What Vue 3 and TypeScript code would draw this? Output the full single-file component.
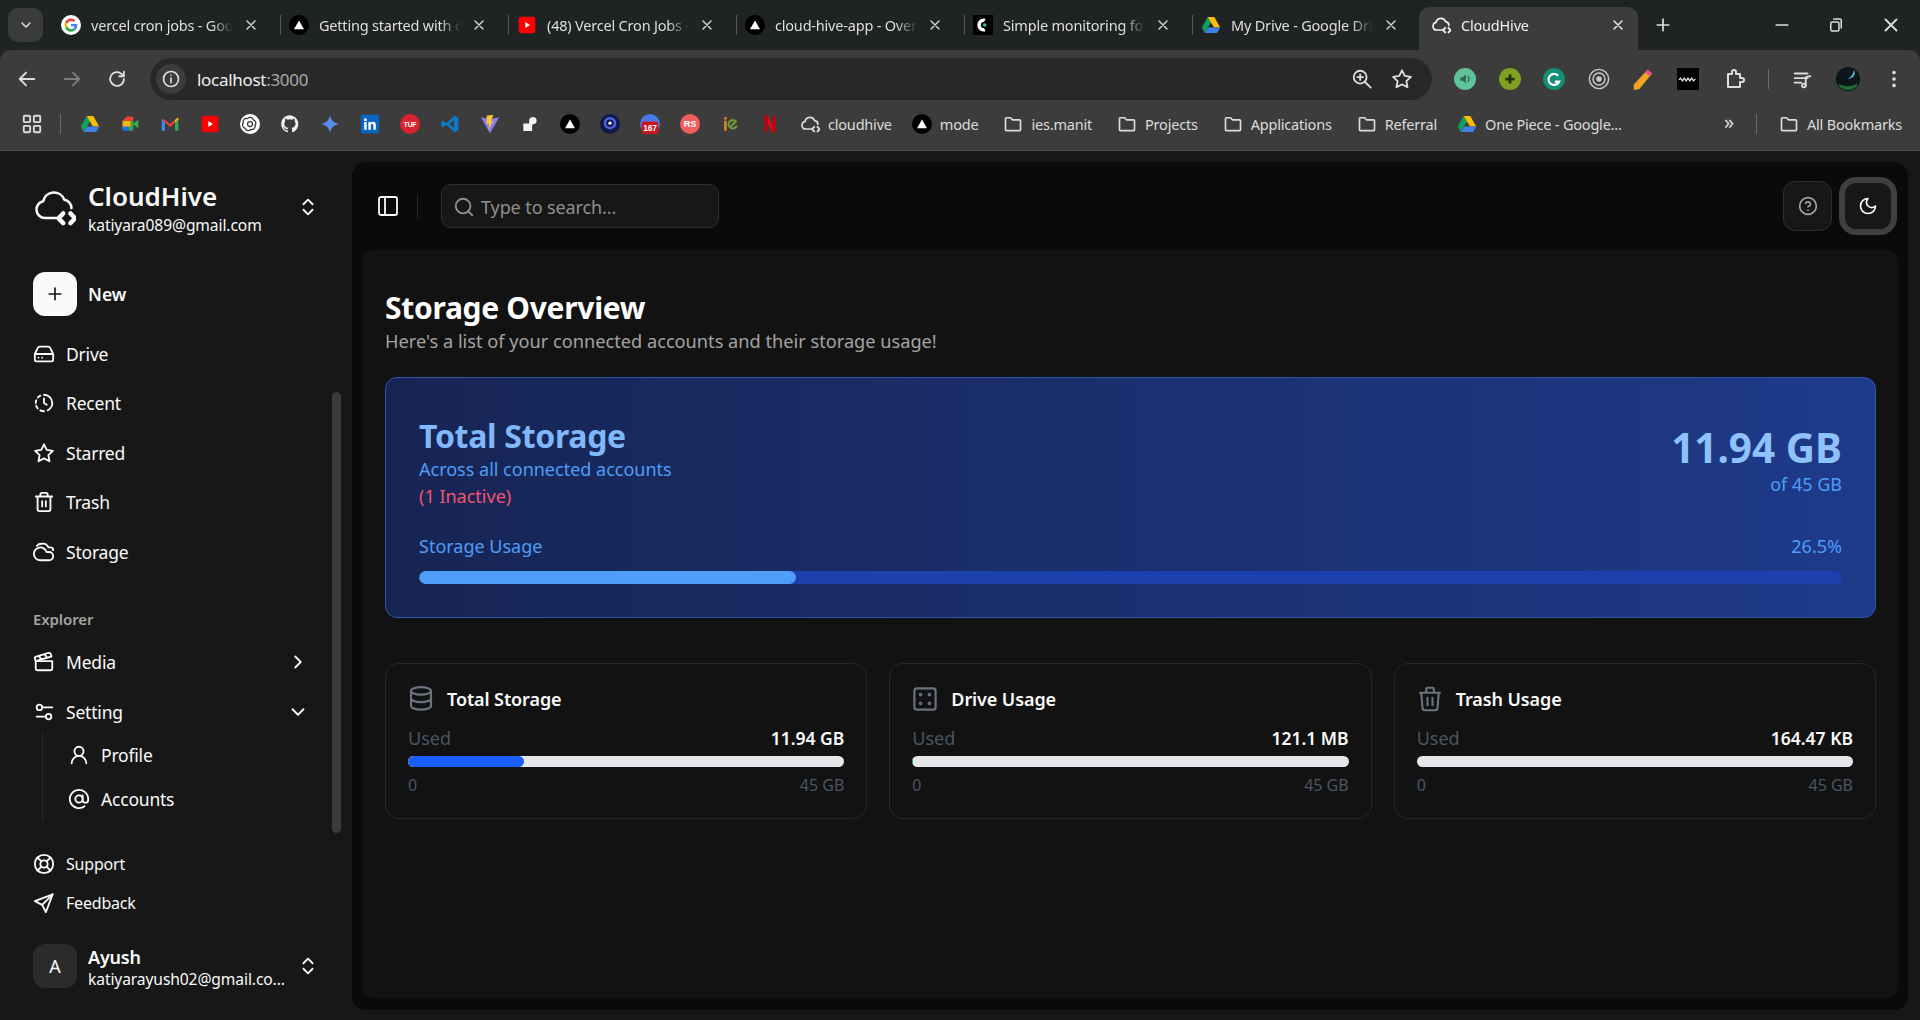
<script setup lang="ts">
interface Tab {
  title: string
  icon: string
  active?: boolean
}

interface StatCard {
  title: string
  icon: string
  used: string
  fill: number
  color: string
}

const ic: Record<string, string> = {
  hive: '<path d="M13.5 18H7a4.6 4.6 0 0 1-.9-9.1A6 6 0 0 1 17.6 8a4.6 4.6 0 0 1 3.9 4.6"/><path d="m17 15.5-2.5 2.7 2.5 2.6M21 15.5l2.5 2.7-2.5 2.6" stroke-width="2.4"/>',
  updown: '<path d="m7 9 5-5 5 5M7 15l5 5 5-5"/>',
  plus: '<path d="M5 12h14M12 5v14"/>',
  drive: '<path d="M22 12H2M5.45 5.11 2 12v6a2 2 0 0 0 2 2h16a2 2 0 0 0 2-2v-6l-3.45-6.89A2 2 0 0 0 16.76 4H7.24a2 2 0 0 0-1.79 1.11ZM6 16h.01M10 16h.01"/>',
  recent: '<path d="M12 7v5l3 2M21 12a9 9 0 0 0-9-9" /><path d="M8 4c-1 .5-2 1.200-2.700 2M3.500 9a9 9 0 0 0-.5 3M3.500 15c.3 1 .9 2 1.600 2.800M8 20c1.200.7 2.600 1 4 1M16 20c1.500-.8 2.800-2 3.700-3.500M20.700 15c.2-.9.300-2 .3-3"/>',
  star: '<path d="M12 2.500l3 6.100 6.700 1-4.900 4.700 1.200 6.700-6-3.200L6 21l1.200-6.700-4.900-4.700 6.700-1Z"/>',
  trash: '<path d="M3 6h18M19 6v14a2 2 0 0 1-2 2H7a2 2 0 0 1-2-2V6M8 6V4a2 2 0 0 1 2-2h4a2 2 0 0 1 2 2v2M10 11v6M14 11v6"/>',
  cloudy: '<path d="M17.500 21H8a7 7 0 1 1 6.700-9h2.800a4.500 4.500 0 1 1 0 9Z"/><path d="M22 10a3 3 0 0 0-3-3h-2.200A7 7 0 0 0 9 3c-2 0-3.600.9-4.800 2.300"/>',
  media: '<path d="M20.200 6 3 11l-.9-2.400c-.3-1.100.3-2.200 1.300-2.500l13.500-4c1.100-.3 2.200.3 2.500 1.300ZM6.200 5.300l3.100 3.900M12.400 3.400l3.100 4"/><path d="M3 11h18v8a2 2 0 0 1-2 2H5a2 2 0 0 1-2-2Z"/>',
  setting: '<circle cx="7" cy="7" r="3"/><path d="M10 7h11"/><circle cx="17" cy="17" r="3"/><path d="M4 17h10"/>',
  right: '<path d="m9 18 6-6-6-6"/>',
  down: '<path d="m6 9 6 6 6-6"/>',
  user: '<circle cx="12" cy="8" r="5"/><path d="M20 21a8 8 0 0 0-16 0"/>',
  at: '<circle cx="12" cy="12" r="4"/><path d="M16 8v5a3 3 0 0 0 6 0v-1a10 10 0 1 0-4 8"/>',
  support: '<circle cx="12" cy="12" r="10"/><circle cx="12" cy="12" r="4"/><path d="m4.930 4.930 4.240 4.240M14.830 14.830l4.240 4.240M14.830 9.170l4.240-4.240M4.930 19.070l4.240-4.240"/>',
  send: '<path d="M21.500 2.500 2 10l8 4 4 8Z"/><path d="M21.500 2.500 10 14"/>',
  panel: '<rect x="3" y="3" width="18" height="18" rx="2"/><path d="M9 3v18"/>',
  search: '<circle cx="11" cy="11" r="8"/><path d="m21 21-4.300-4.300"/>',
  help: '<circle cx="12" cy="12" r="10"/><path d="M9.090 9a3 3 0 0 1 5.830 1c0 2-3 3-3 3M12 17h.01"/>',
  moon: '<path d="M12 3a6 6 0 0 0 9 9 9 9 0 1 1-9-9Z"/>',
  database: '<ellipse cx="12" cy="5.500" rx="8" ry="3"/><path d="M4 5.500v6a8 3 0 0 0 16 0v-6M4 11.500v6a8 3 0 0 0 16 0v-6"/>',
  dice: '<rect x="3.500" y="3.500" width="17" height="17" rx="2"/><circle cx="8.500" cy="8.500" r=".6"/><circle cx="15.500" cy="8.500" r=".6"/><circle cx="8.500" cy="15.500" r=".6"/><circle cx="15.500" cy="15.500" r=".6"/>',
  bin: '<path d="M4 7h16M10 11v6M14 11v6M5 7l1 12a2 2 0 0 0 2 2h8a2 2 0 0 0 2-2l1-12M9 7V4a1 1 0 0 1 1-1h4a1 1 0 0 1 1 1v3"/>',
  back: '<path d="M20 12H5M11 5l-7 7 7 7"/>',
  forward: '<path d="M4 12h15M13 5l7 7-7 7"/>',
  reload: '<path d="M19.500 12a7.500 7.500 0 1 1-2.300-5.400L19.500 9M19.500 4v5h-5"/>',
  info: '<circle cx="12" cy="12" r="9"/><path d="M12 11v5.500M12 7.500h.01"/>',
  zoom: '<circle cx="10" cy="10" r="7"/><path d="m15 15 6.500 6.500M10 7v6M7 10h6"/>',
  close: '<path d="m6 6 12 12M18 6 6 18"/>',
  min: '<path d="M5 12h14"/>',
  restore: '<rect x="5" y="8" width="11" height="12" rx="2"/><path d="M9 4h8a2 2 0 0 1 2 2v10"/>',
  grid: '<rect x="3" y="3" width="7" height="7" rx="1"/><rect x="14" y="3" width="7" height="7" rx="1"/><rect x="3" y="14" width="7" height="7" rx="1"/><rect x="14" y="14" width="7" height="7" rx="1"/>',
  folder: '<path d="M3 5.500a1 1 0 0 1 1-1h5l2.500 2.500H20a1 1 0 0 1 1 1v11a1 1 0 0 1-1 1H4a1 1 0 0 1-1-1Z"/>',
  ext: '<path d="M6 7h4V5a2 2 0 0 1 4 0v2h4v4h2a2 2 0 0 1 0 4h-2v5H6Z"/>',
  queue: '<path d="M3 6h14M3 11h14M3 16h7M15 19V10l5-1"/><circle cx="13" cy="19" r="2"/>',
  dots: '<circle cx="12" cy="5" r="1"/><circle cx="12" cy="12" r="1"/><circle cx="12" cy="19" r="1"/>'
}

const badgeText = 'font-family="Liberation Sans, sans-serif" font-weight="700" text-anchor="middle" fill="#fff"'

const fav: Record<string, string> = {
  google: '<circle cx="12" cy="12" r="12" fill="#fff"/><path d="M19.500 12.200c0-.6 0-1-.1-1.500H12v2.900h4.300c-.2 1-.8 1.800-1.600 2.400l2.500 1.900c1.500-1.300 2.300-3.300 2.300-5.700Z" fill="#4285f4"/><path d="M12 20c2.100 0 3.900-.7 5.200-1.900l-2.500-2c-.7.500-1.600.8-2.700.8-2.100 0-3.800-1.400-4.500-3.300L4.900 15.600A8 8 0 0 0 12 20Z" fill="#34a853"/><path d="M7.500 13.600a4.800 4.800 0 0 1 0-3.100L4.900 8.400a8 8 0 0 0 0 7.200Z" fill="#fbbc05"/><path d="M12 7.100c1.200 0 2.200.4 3 1.200l2.200-2.200A8 8 0 0 0 4.900 8.400l2.600 2.100C8.200 8.500 9.900 7.100 12 7.100Z" fill="#ea4335"/>',
  vercel: '<circle cx="12" cy="12" r="12" fill="#000"/><path d="M12 6.500 18 17H6Z" fill="#fff"/>',
  ytsmall: '<rect x="2" y="2" width="20" height="20" rx="3" fill="#f00"/><path d="m10 8.500 5.500 3.500-5.500 3.500Z" fill="#fff"/>',
  cronitor: '<rect width="24" height="24" fill="#000"/><path d="M15 4.500a7.800 7.800 0 1 0 0 15l-1.500-3.500a3.800 3.800 0 1 1 0-8Z" fill="#fff"/><circle cx="14" cy="12" r="2.200" fill="#22d58b"/>',
  gdrive: '<path d="M8 2.500 1 15l3.500 6.500L12 9Z" fill="#0fa15b"/><path d="M8 2.500h8L23 15h-7.500Z" fill="#fbbc04"/><path d="M8.500 15H23l-3.500 6.500h-15Z" fill="#3f7fe6"/>',
  meet: '<path d="M3 8h10v9H3Z" fill="#f2b705"/><path d="M3 15h8v5H5a2 2 0 0 1-2-2Z" fill="#1a73e8"/><path d="M8 3h6a2 2 0 0 1 2 2v3H3Z" fill="#ea4335"/><path d="M13 8h3v10a2 2 0 0 1-2 2h-3v-5h2Z" fill="#34a853"/><path d="m16 11 6-4v10l-6-4Z" fill="#34a853"/>',
  gmail: '<path d="M2 6v14h4V10Z" fill="#4285f4"/><path d="M22 6v14h-4V10Z" fill="#34a853"/><path d="m2 6 4 1 6 5 6-5 4-1-10 10Z" fill="#ea4335"/><path d="M18 7 22 4v3l-4 3Z" fill="#fbbc04"/>',
  openai: '<circle cx="12" cy="12" r="12" fill="#fff"/><g fill="none" stroke="#333" stroke-width="1.500"><circle cx="12" cy="12" r="3"/><path d="M9 5.500a4 4 0 0 1 7 1.500 4 4 0 0 1 2 6.500 4 4 0 0 1-5 5 4 4 0 0 1-7-1.500 4 4 0 0 1-2-6.500 4 4 0 0 1 5-5Z"/></g>',
  github: '<path d="M12 1.500a10.500 10.500 0 0 0-3.300 20.500c.5.100.7-.2.700-.5v-2c-3 .6-3.600-1.300-3.600-1.300-.5-1.200-1.200-1.500-1.200-1.500-1-.7 0-.7 0-.7 1 .1 1.600 1.100 1.600 1.100 1 1.600 2.500 1.200 3.100.9.100-.7.400-1.200.7-1.400-2.300-.3-4.800-1.200-4.800-5.200 0-1.100.4-2.100 1.100-2.800-.1-.3-.5-1.300.1-2.800 0 0 .9-.3 2.900 1a10 10 0 0 1 5.200 0c2-1.300 2.900-1 2.900-1 .6 1.500.2 2.500.1 2.800.7.700 1.100 1.700 1.100 2.800 0 4-2.400 4.900-4.800 5.200.4.300.7 1 .7 1.900v2.800c0 .3.200.6.700.5A10.500 10.500 0 0 0 12 1.500Z" fill="#f1f1f1"/>',
  gemini: '<path d="M12 1c.6 6 4.500 10 11 11-6.500 1-10.400 5-11 11-.6-6-4.500-10-11-11 6.500-1 10.400-5 11-11Z" fill="#5b8def"/>',
  linkedin: '<rect x="1" y="1" width="22" height="22" rx="2" fill="#0a66c2"/><path d="M5 9.500h3V19H5ZM5 5.500h3v2.800H5ZM10 9.500h3v1.300c.6-1 1.600-1.500 2.800-1.500 2.400 0 3.200 1.500 3.200 4V19h-3v-5c0-1.300-.4-2-1.500-2s-1.500.8-1.500 2v5h-3Z" fill="#fff"/>',
  tuf: `<circle cx="12" cy="12" r="12" fill="#d9232f"/><text x="12" y="15" font-size="8" ${badgeText}>TUF</text>`,
  vscode: '<path d="M17 2 22 4.500v15L17 22 7.500 13l-4 3L1.500 15v-6l2-1 4 3Z" fill="#0a7acb"/><path d="m17 7.500-6 4.500 6 4.500Z" fill="#3c3c3c"/>',
  vite: '<path d="M1 4 12 23 23 4l-11 2Z" fill="#8f7bf5"/><path d="M8 2 16 1l-3 8 3-1-6 11 1-8-3 1Z" fill="#ffca28"/>',
  render: '<path d="M15 3.500a4.500 4.500 0 0 1 5 4.500c0 3-2.500 4.500-5.500 4.500v8H4v-9h7V8a4.500 4.500 0 0 1 4-4.500Z" fill="#f5f5f5"/>',
  circle: '<circle cx="12" cy="12" r="12" fill="#111a46"/><circle cx="12" cy="11" r="6" fill="none" stroke="#4c65e8" stroke-width="3"/><circle cx="12" cy="11" r="2" fill="#fff"/>',
  num167: `<circle cx="12" cy="12" r="12" fill="#4a78e8"/><rect x="2" y="9" width="20" height="15" rx="3" fill="#c9161d"/><text x="12" y="20" font-size="10" ${badgeText}>167</text>`,
  rs: `<circle cx="12" cy="12" r="12" fill="#f25c5c"/><text x="12" y="16" font-size="11" ${badgeText}>RS</text>`,
  ie: '<path d="M5 8h3v12H5ZM5 4h3v2.500H5Z" fill="#e08a1f"/><path d="M20 14a5 5 0 1 1-1-5l-6 6" fill="none" stroke="#6f9a35" stroke-width="2.500"/>',
  netflix: '<path d="M5 2h4.500L19 22h-4.500Z" fill="#e50914"/><path d="M5 2h4v18l-4 2ZM15 2h4v20l-4-2Z" fill="#b20710"/>',
  sound: '<circle cx="12" cy="12" r="12" fill="#5fc39a"/><path d="M7 10v4h2.500l3.500 3V7L9.500 10Z" fill="#2f6b52"/><path d="M15 9a4 4 0 0 1 0 6" fill="none" stroke="#2f6b52" stroke-width="1.500"/>',
  plusgreen: '<circle cx="12" cy="12" r="12" fill="#7ea121"/><path d="M12 7v10M7 12h10" stroke="#22320a" stroke-width="3"/>',
  grammarly: '<circle cx="12" cy="12" r="12" fill="#0f8f76"/><path d="M16.500 8.500a6 6 0 1 0 1 6.500H13" fill="none" stroke="#fff" stroke-width="2.500"/>',
  target: '<g fill="none" stroke="#c8c8c8" stroke-width="1.600"><circle cx="12" cy="12" r="10.500"/><circle cx="12" cy="12" r="6.500"/></g><circle cx="12" cy="12" r="3" fill="#c8c8c8"/>',
  pencil: '<path d="m17 2 5 4L8 23l-6 1 0-6Z" fill="#f6a323"/><path d="m17 2 5 4-2.500 3-5-4Z" fill="#ee4d8b"/>',
  wave: '<rect width="24" height="24" fill="#000"/><path d="M2 13l2-2 2 3 2-3 2 3 2-3 2 3 2-3 2 3 2-2" fill="none" stroke="#eee" stroke-width="1.300"/>',
  avatar: '<circle cx="12" cy="12" r="12" fill="#0c1618"/><path d="M3 17c6 3 14 3 18-1v3a12 12 0 0 1-18 0Z" fill="#1f6b35"/><path d="M18 3c2 4 0 8-6 9 4-3 5-5 6-9Z" fill="#45c3e8"/>'
}

const tabs: Tab[] = [
  { title: 'vercel cron jobs - Google Search', icon: 'google' },
  { title: 'Getting started with cron jobs', icon: 'vercel' },
  { title: '(48) Vercel Cron Jobs - YouTube', icon: 'ytsmall' },
  { title: 'cloud-hive-app - Overview', icon: 'vercel' },
  { title: 'Simple monitoring for cron', icon: 'cronitor' },
  { title: 'My Drive - Google Drive', icon: 'gdrive' }
]

const appIcons = ['gdrive', 'meet', 'gmail', 'ytsmall', 'openai', 'github', 'gemini', 'linkedin', 'tuf', 'vscode', 'vite', 'render', 'vercel', 'circle', 'num167', 'rs', 'ie', 'netflix']
const folders = ['ies.manit', 'Projects', 'Applications', 'Referral']
const extensions = ['sound', 'plusgreen', 'grammarly', 'target', 'pencil', 'wave']

const mainNav = [
  { label: 'Drive', icon: 'drive' },
  { label: 'Recent', icon: 'recent' },
  { label: 'Starred', icon: 'star' },
  { label: 'Trash', icon: 'trash' },
  { label: 'Storage', icon: 'cloudy' }
]

const stats: StatCard[] = [
  { title: 'Total Storage', icon: 'database', used: '11.94 GB', fill: 26.5, color: '#1a5fff' },
  { title: 'Drive Usage', icon: 'dice', used: '121.1 MB', fill: 0.2, color: '#16a34a' },
  { title: 'Trash Usage', icon: 'bin', used: '164.47 KB', fill: 0.01, color: '#16a34a' }
]
</script>

<template>
  <div class="screen">
    <!-- browser frame -->
    <header class="browser">
      <div class="tabstrip">
        <button class="tab-search"><svg class="ln s16" viewBox="0 0 24 24" v-html="ic.down" /></button>
        <div v-for="tab in tabs" :key="tab.title" class="tab">
          <svg class="fav s20" viewBox="0 0 24 24" v-html="fav[tab.icon]" />
          <span class="tab-title">{{ tab.title }}</span>
          <svg class="ln s16" viewBox="0 0 24 24" v-html="ic.close" />
        </div>
        <div class="tab active">
          <svg class="ln s20" viewBox="0 0 24 24" v-html="ic.hive" />
          <span class="tab-title">CloudHive</span>
          <svg class="ln s16" viewBox="0 0 24 24" v-html="ic.close" />
        </div>
        <svg class="ln s20 new-tab" viewBox="0 0 24 24" v-html="ic.plus" />
        <div class="win-controls">
          <svg class="ln s20" viewBox="0 0 24 24" v-html="ic.min" />
          <svg class="ln s18" viewBox="0 0 24 24" v-html="ic.restore" />
          <svg class="ln s22" viewBox="0 0 24 24" v-html="ic.close" />
        </div>
      </div>

      <div class="toolbar">
        <svg class="ln s22 tb-nav" viewBox="0 0 24 24" v-html="ic.back" />
        <svg class="ln s22 tb-nav dim" viewBox="0 0 24 24" v-html="ic.forward" />
        <svg class="ln s22 tb-nav" viewBox="0 0 24 24" v-html="ic.reload" />
        <div class="omnibox">
          <span class="site-info"><svg class="ln s20" viewBox="0 0 24 24" v-html="ic.info" /></span>
          <span class="url">localhost<span class="port">:3000</span></span>
          <svg class="ln s22 omni-zoom" viewBox="0 0 24 24" v-html="ic.zoom" />
          <svg class="ln s22" viewBox="0 0 24 24" v-html="ic.star" />
        </div>
        <div class="tb-right">
          <svg v-for="ext in extensions" :key="ext" class="fav s22" viewBox="0 0 24 24" v-html="fav[ext]" />
          <svg class="ln s24" viewBox="0 0 24 24" v-html="ic.ext" />
          <span class="tb-sep"></span>
          <svg class="ln s22" viewBox="0 0 24 24" v-html="ic.queue" />
          <svg class="fav s24" viewBox="0 0 24 24" v-html="fav.avatar" />
          <svg class="ln s22" viewBox="0 0 24 24" v-html="ic.dots" />
        </div>
      </div>

      <div class="bookmarks">
        <svg class="ln s22 bm-grid" viewBox="0 0 24 24" v-html="ic.grid" />
        <span class="bm-sep"></span>
        <div class="bm-icons">
          <svg v-for="(name, i) in appIcons" :key="i" class="fav s20" viewBox="0 0 24 24" v-html="fav[name]" />
        </div>
        <div class="bm-item">
          <svg class="ln s20" viewBox="0 0 24 24" v-html="ic.hive" /><span>cloudhive</span>
        </div>
        <div class="bm-item">
          <svg class="fav s20" viewBox="0 0 24 24" v-html="fav.vercel" /><span>mode</span>
        </div>
        <div v-for="name in folders" :key="name" class="bm-item wide">
          <svg class="ln s20" viewBox="0 0 24 24" v-html="ic.folder" /><span>{{ name }}</span>
        </div>
        <div class="bm-item">
          <svg class="fav s20" viewBox="0 0 24 24" v-html="fav.gdrive" /><span>One Piece - Google...</span>
        </div>
        <div class="bm-end">
          <span class="chevrons">»</span>
          <span class="bm-sep"></span>
          <div class="bm-item all">
            <svg class="ln s20" viewBox="0 0 24 24" v-html="ic.folder" /><span>All Bookmarks</span>
          </div>
        </div>
      </div>
    </header>

    <div class="app">
      <aside class="sidebar">
        <div class="team">
          <svg class="ln logo" viewBox="0 0 24 24" v-html="ic.hive" />
          <div class="team-text">
            <div class="team-name">CloudHive</div>
            <div class="team-mail">katiyara089@gmail.com</div>
          </div>
          <svg class="ln s22 updown" viewBox="0 0 24 24" v-html="ic.updown" />
        </div>

        <div class="new-row">
          <span class="new-btn"><svg class="ln s20 dark" viewBox="0 0 24 24" v-html="ic.plus" /></span>
          <span class="new-label">New</span>
        </div>

        <nav class="nav">
          <a v-for="item in mainNav" :key="item.label" class="nav-item">
            <svg class="ln s22" viewBox="0 0 24 24" v-html="ic[item.icon]" />
            <span>{{ item.label }}</span>
          </a>
        </nav>

        <div class="group-label">Explorer</div>
        <a class="nav-item">
          <svg class="ln s22" viewBox="0 0 24 24" v-html="ic.media" />
          <span>Media</span>
          <svg class="ln s22 caret" viewBox="0 0 24 24" v-html="ic.right" />
        </a>
        <a class="nav-item">
          <svg class="ln s22" viewBox="0 0 24 24" v-html="ic.setting" />
          <span>Setting</span>
          <svg class="ln s22 caret" viewBox="0 0 24 24" v-html="ic.down" />
        </a>
        <div class="subnav">
          <a class="sub-item"><svg class="ln s22" viewBox="0 0 24 24" v-html="ic.user" /><span>Profile</span></a>
          <a class="sub-item"><svg class="ln s22" viewBox="0 0 24 24" v-html="ic.at" /><span>Accounts</span></a>
        </div>

        <div class="secondary">
          <a class="sec-item"><svg class="ln s22" viewBox="0 0 24 24" v-html="ic.support" /><span>Support</span></a>
          <a class="sec-item"><svg class="ln s22" viewBox="0 0 24 24" v-html="ic.send" /><span>Feedback</span></a>
        </div>

        <div class="account">
          <span class="avatar">A</span>
          <div class="team-text acc-text">
            <div class="acc-name">Ayush</div>
            <div class="team-mail">katiyarayush02@gmail.co...</div>
          </div>
          <svg class="ln s22 updown" viewBox="0 0 24 24" v-html="ic.updown" />
        </div>

        <span class="scroll-thumb"></span>
      </aside>

      <main class="inset">
        <div class="topbar">
          <svg class="ln s24 panel" viewBox="0 0 24 24" v-html="ic.panel" />
          <span class="top-sep"></span>
          <div class="search">
            <svg class="ln s22" viewBox="0 0 24 24" v-html="ic.search" />
            <span>Type to search...</span>
          </div>
          <button class="icon-btn help"><svg class="ln s20" viewBox="0 0 24 24" v-html="ic.help" /></button>
          <button class="icon-btn focus"><svg class="ln s20" viewBox="0 0 24 24" v-html="ic.moon" /></button>
        </div>

        <section class="content">
          <h1>Storage Overview</h1>
          <p class="lead">Here's a list of your connected accounts and their storage usage!</p>

          <div class="total-card">
            <div class="total-head">
              <div>
                <h2>Total Storage</h2>
                <div class="total-sub">Across all connected accounts</div>
                <div class="total-inactive">(1 Inactive)</div>
              </div>
              <div class="total-right">
                <div class="total-value">11.94 GB</div>
                <div class="total-sub small">of 45 GB</div>
              </div>
            </div>
            <div class="usage-row">
              <span>Storage Usage</span>
              <span>26.5%</span>
            </div>
            <div class="usage-track"><div class="usage-fill" :style="{ width: '26.5%' }"></div></div>
          </div>

          <div class="stat-grid">
            <article v-for="card in stats" :key="card.title" class="stat">
              <div class="stat-head">
                <svg class="ln stat-icon" viewBox="0 0 24 24" v-html="ic[card.icon]" />
                <span>{{ card.title }}</span>
              </div>
              <div class="stat-row used">
                <span class="muted">Used</span>
                <span class="stat-used">{{ card.used }}</span>
              </div>
              <div class="stat-track">
                <div class="stat-fill" :style="{ width: card.fill + '%', background: card.color }"></div>
              </div>
              <div class="stat-row foot">
                <span class="muted">0</span>
                <span class="muted">45 GB</span>
              </div>
            </article>
          </div>
        </section>
      </main>
    </div>
  </div>
</template>

<style>
html,
body {
  margin: 0;
  background: #171717;
  overflow: hidden;
}
</style>

<style scoped>
.screen {
  width: 1920px;
  height: 1020px;
  display: flex;
  flex-direction: column;
  overflow: hidden;
  font-family: 'Noto Sans', 'Open Sans', sans-serif;
  color: #fafafa;
}

.ln {
  fill: none;
  stroke: currentColor;
  stroke-width: 2;
  stroke-linecap: round;
  stroke-linejoin: round;
  flex-shrink: 0;
}

.fav {
  flex-shrink: 0;
}

.s16 { width: 16px; height: 16px; }
.s18 { width: 18px; height: 18px; }
.s20 { width: 20px; height: 20px; }
.s22 { width: 22px; height: 22px; }
.s24 { width: 24px; height: 24px; }

/* browser frame */
.browser {
  height: 151px;
  flex-shrink: 0;
  background: #202323;
  color: #dedede;
  font-size: 14.5px;
  letter-spacing: -0.2px;
}

.tabstrip {
  height: 50px;
  display: flex;
  align-items: flex-end;
  padding-left: 8px;
}

.tab-search {
  width: 35px;
  height: 34px;
  margin: 0 10px 8px 0;
  padding: 0;
  border: 0;
  border-radius: 10px;
  background: #3a3b3b;
  color: #e3e3e3;
  display: flex;
  align-items: center;
  justify-content: center;
}

.tab {
  width: 228px;
  height: 43px;
  box-sizing: border-box;
  display: flex;
  align-items: center;
  gap: 10px;
  padding: 0 22px 7px 8px;
  position: relative;
}

.tab:not(.active)::after {
  content: '';
  position: absolute;
  right: 0;
  top: 8px;
  width: 1px;
  height: 20px;
  background: #55585a;
}

.tab:nth-child(7)::after {
  display: none;
}

.tab-title {
  flex: 1;
  overflow: hidden;
  white-space: nowrap;
  -webkit-mask-image: linear-gradient(90deg, #000 85%, transparent);
  mask-image: linear-gradient(90deg, #000 85%, transparent);
}

.tab.active {
  width: 219px;
  background: #3c3c3c;
  border-radius: 10px 10px 0 0;
  color: #f0f0f0;
  margin-left: -2px;
  padding: 0 12px 7px;
}

.new-tab {
  margin: 0 0 15px 15px;
}

.win-controls {
  margin-left: auto;
  height: 50px;
  display: flex;
  align-items: center;
  gap: 35px;
  padding: 0 18px 0 0;
}

.toolbar {
  height: 58px;
  background: #3c3c3c;
  border-radius: 10px 10px 0 0;
  display: flex;
  align-items: center;
  padding: 0 15px 0 16px;
  box-sizing: border-box;
}

.tb-nav {
  margin-right: 23px;
}

.tb-nav.dim {
  opacity: 0.4;
}

.omnibox {
  width: 1282px;
  height: 42px;
  margin-left: -1px;
  border-radius: 21px;
  background: #282828;
  display: flex;
  align-items: center;
  padding: 0 19px 0 6px;
  box-sizing: border-box;
}

.site-info {
  width: 30px;
  height: 30px;
  border-radius: 50%;
  background: #3c3c3c;
  display: flex;
  align-items: center;
  justify-content: center;
}

.url {
  margin-left: 11px;
  font-size: 17px;
  letter-spacing: -0.3px;
  color: #f0f0f0;
  flex: 1;
}

.port {
  color: #a8a8a8;
}

.omni-zoom {
  margin-right: 18px;
}

.tb-right {
  flex: 1;
  display: flex;
  align-items: center;
  justify-content: space-between;
  padding-left: 22px;
}

.tb-sep,
.bm-sep {
  width: 1px;
  height: 20px;
  background: #6a6a6a;
}

.bookmarks {
  height: 43px;
  background: #3c3c3c;
  display: flex;
  align-items: center;
  padding: 0 18px 11px 21px;
  box-sizing: border-box;
  border-bottom: 1px solid #4a4a4a;
}

.bm-grid {
  margin-right: 17px;
}

.bm-icons {
  display: flex;
  gap: 20px;
  margin-left: 19px;
}

.bm-item {
  display: flex;
  align-items: center;
  gap: 8px;
  margin-left: 20px;
  white-space: nowrap;
  color: #dcdcdc;
}

.bm-item.wide {
  margin-left: 25px;
}

.bm-end {
  margin-left: auto;
  display: flex;
  align-items: center;
  gap: 22px;
}

.bm-end .bm-item {
  margin-left: 0;
}

.chevrons {
  font-size: 20px;
  line-height: 1;
  margin-top: -4px;
}

/* app shell */
.app {
  flex: 1;
  min-height: 0;
  display: flex;
  background: #171717;
}

.sidebar {
  width: 352px;
  flex-shrink: 0;
  box-sizing: border-box;
  padding: 26px 0 0 33px;
  position: relative;
  display: flex;
  flex-direction: column;
}

.team {
  display: flex;
  align-items: center;
  height: 60px;
  padding-right: 33px;
}

.logo {
  width: 44px;
  height: 44px;
  margin-left: -1px;
  margin-right: 12px;
  stroke-width: 1.400;
}

.team-text {
  flex: 1;
  min-width: 0;
}

.team-name {
  font-size: 26px;
  line-height: 36px;
  font-weight: 600;
}

.team-mail {
  font-size: 15.600px;
  line-height: 22px;
  letter-spacing: -0.1px;
  white-space: nowrap;
}

.acc-text {
  padding-top: 3px;
}

.acc-name {
  font-size: 18px;
  line-height: 22px;
  font-weight: 600;
  letter-spacing: -0.2px;
}

.new-row {
  display: flex;
  align-items: center;
  gap: 11px;
  margin-top: 35px;
}

.new-btn {
  width: 44px;
  height: 44px;
  border-radius: 12px;
  background: #fafafa;
  display: flex;
  align-items: center;
  justify-content: center;
}

.dark {
  color: #171717;
}

.new-label {
  font-size: 17.500px;
  font-weight: 600;
}

.nav {
  margin-top: 13px;
}

.nav-item {
  height: 49.500px;
  display: flex;
  align-items: center;
  gap: 11px;
  padding-right: 43px;
  font-size: 17.500px;
  letter-spacing: -0.2px;
}

.caret {
  margin-left: auto;
}

.group-label {
  margin-top: 27px;
  margin-bottom: 4px;
  height: 30px;
  line-height: 30px;
  font-size: 15px;
  font-weight: 600;
  color: #a3a3a3;
  letter-spacing: -0.1px;
}

.subnav {
  margin-left: 9px;
  border-left: 1px solid #2a2a2a;
  padding-left: 25px;
  margin-top: -4px;
}

.sub-item {
  height: 44px;
  display: flex;
  align-items: center;
  gap: 11px;
  font-size: 17.500px;
  letter-spacing: -0.2px;
}

.secondary {
  margin-top: 24px;
}

.sec-item {
  height: 39px;
  display: flex;
  align-items: center;
  gap: 11px;
  font-size: 16px;
  letter-spacing: -0.2px;
}

.account {
  display: flex;
  align-items: center;
  gap: 11px;
  margin-top: 20px;
  padding-right: 33px;
}

.avatar {
  width: 44px;
  height: 44px;
  flex-shrink: 0;
  border-radius: 12px;
  background: #2b2b2b;
  display: flex;
  align-items: center;
  justify-content: center;
  font-size: 18px;
}

.scroll-thumb {
  position: absolute;
  left: 332px;
  top: 241px;
  width: 9px;
  height: 441px;
  border-radius: 5px;
  background: #3b3b3b;
}

.inset {
  flex: 1;
  margin: 11px 12px 10px 0;
  background: #0a0a0a;
  border-radius: 14px;
  padding: 0 10px 12px;
  display: flex;
  flex-direction: column;
  min-width: 0;
}

.topbar {
  height: 88px;
  flex-shrink: 0;
  display: flex;
  align-items: center;
  padding: 0 1px 0 14px;
}

.panel {
  color: #fafafa;
  stroke-width: 1.800;
}

.top-sep {
  width: 1px;
  height: 24px;
  background: #262626;
  margin: 0 23px 0 17px;
}

.search {
  width: 278px;
  height: 44px;
  box-sizing: border-box;
  border: 1px solid #2e2e2e;
  border-radius: 10px;
  background: #171717;
  color: #8f8f8f;
  display: flex;
  align-items: center;
  gap: 6px;
  padding: 1px 11px 0;
  font-size: 18px;
  letter-spacing: -0.1px;
}

.icon-btn {
  width: 49px;
  height: 50px;
  padding: 0;
  border-radius: 12px;
  border: 1px solid #2e2e2e;
  background: #171717;
  color: #a3a3a3;
  display: flex;
  align-items: center;
  justify-content: center;
}

.help {
  margin-left: auto;
}

.focus {
  margin-left: 12px;
  margin-right: 5px;
  color: #fafafa;
  box-shadow: 0 0 0 5px #404040;
  border-color: #404040;
  width: 48px;
  height: 48px;
}

.content {
  flex: 1;
  background: #121212;
  border-radius: 12px;
  padding: 38px 22px 0 23px;
  min-height: 0;
}

h1 {
  margin: 0;
  font-size: 30px;
  line-height: 40px;
  font-weight: 700;
  letter-spacing: -0.3px;
  color: #fff;
}

.lead {
  margin: 0;
  font-size: 18.200px;
  line-height: 26px;
  color: #a3a3a3;
}

.total-card {
  margin-top: 23px;
  height: 241px;
  box-sizing: border-box;
  border: 1px solid #2f55a8;
  border-radius: 12px;
  background: linear-gradient(90deg, #172554, #1e3a8a);
  padding: 39px 33px 0;
}

.total-head {
  display: flex;
  justify-content: space-between;
}

h2 {
  margin: 0;
  font-size: 32px;
  line-height: 38px;
  font-weight: 700;
  letter-spacing: -0.3px;
  color: #7fb8fb;
}

.total-sub {
  font-size: 18px;
  line-height: 28px;
  color: #4d9ef8;
}

.total-inactive {
  font-size: 18px;
  line-height: 26px;
  color: #f5536c;
}

.total-right {
  text-align: right;
  padding-top: 8px;
}

.total-value {
  font-size: 40.500px;
  line-height: 46px;
  font-weight: 700;
  color: #8fc2fb;
}

.total-sub.small {
  line-height: 22px;
  margin-top: 2px;
}

.usage-row {
  margin-top: 24px;
  display: flex;
  justify-content: space-between;
  font-size: 18px;
  line-height: 26px;
  color: #4d9ef8;
}

.usage-track {
  margin-top: 12px;
  height: 13px;
  border-radius: 7px;
  background: #1d40af;
  overflow: hidden;
}

.usage-fill {
  height: 100%;
  border-radius: 7px;
  background: #4f9cf9;
}

.stat-grid {
  margin-top: 45px;
  display: grid;
  grid-template-columns: repeat(3, 1fr);
  gap: 22px;
}

.stat {
  height: 156px;
  box-sizing: border-box;
  border: 1px solid #262626;
  border-radius: 14px;
  padding: 22px;
}

.stat-head {
  display: flex;
  align-items: center;
  gap: 11px;
  height: 26px;
  font-size: 18px;
  font-weight: 600;
  letter-spacing: -0.1px;
  color: #fafafa;
}

.stat-icon {
  width: 30px;
  height: 30px;
  margin-left: -2px;
  color: #6b7280;
  stroke-width: 1.700;
}

.stat-row {
  display: flex;
  justify-content: space-between;
  align-items: center;
  height: 24px;
  font-size: 18px;
}

.stat-row.used {
  margin-top: 14px;
}

.stat-row.foot {
  margin-top: 6px;
  font-size: 16px;
}

.muted {
  color: #4b5563;
}

.stat-used {
  font-size: 17.500px;
  font-weight: 600;
}

.stat-track {
  margin-top: 6px;
  height: 11px;
  border-radius: 6px;
  background: #e5e7eb;
  overflow: hidden;
}

.stat-fill {
  height: 100%;
  border-radius: 6px;
}
</style>
